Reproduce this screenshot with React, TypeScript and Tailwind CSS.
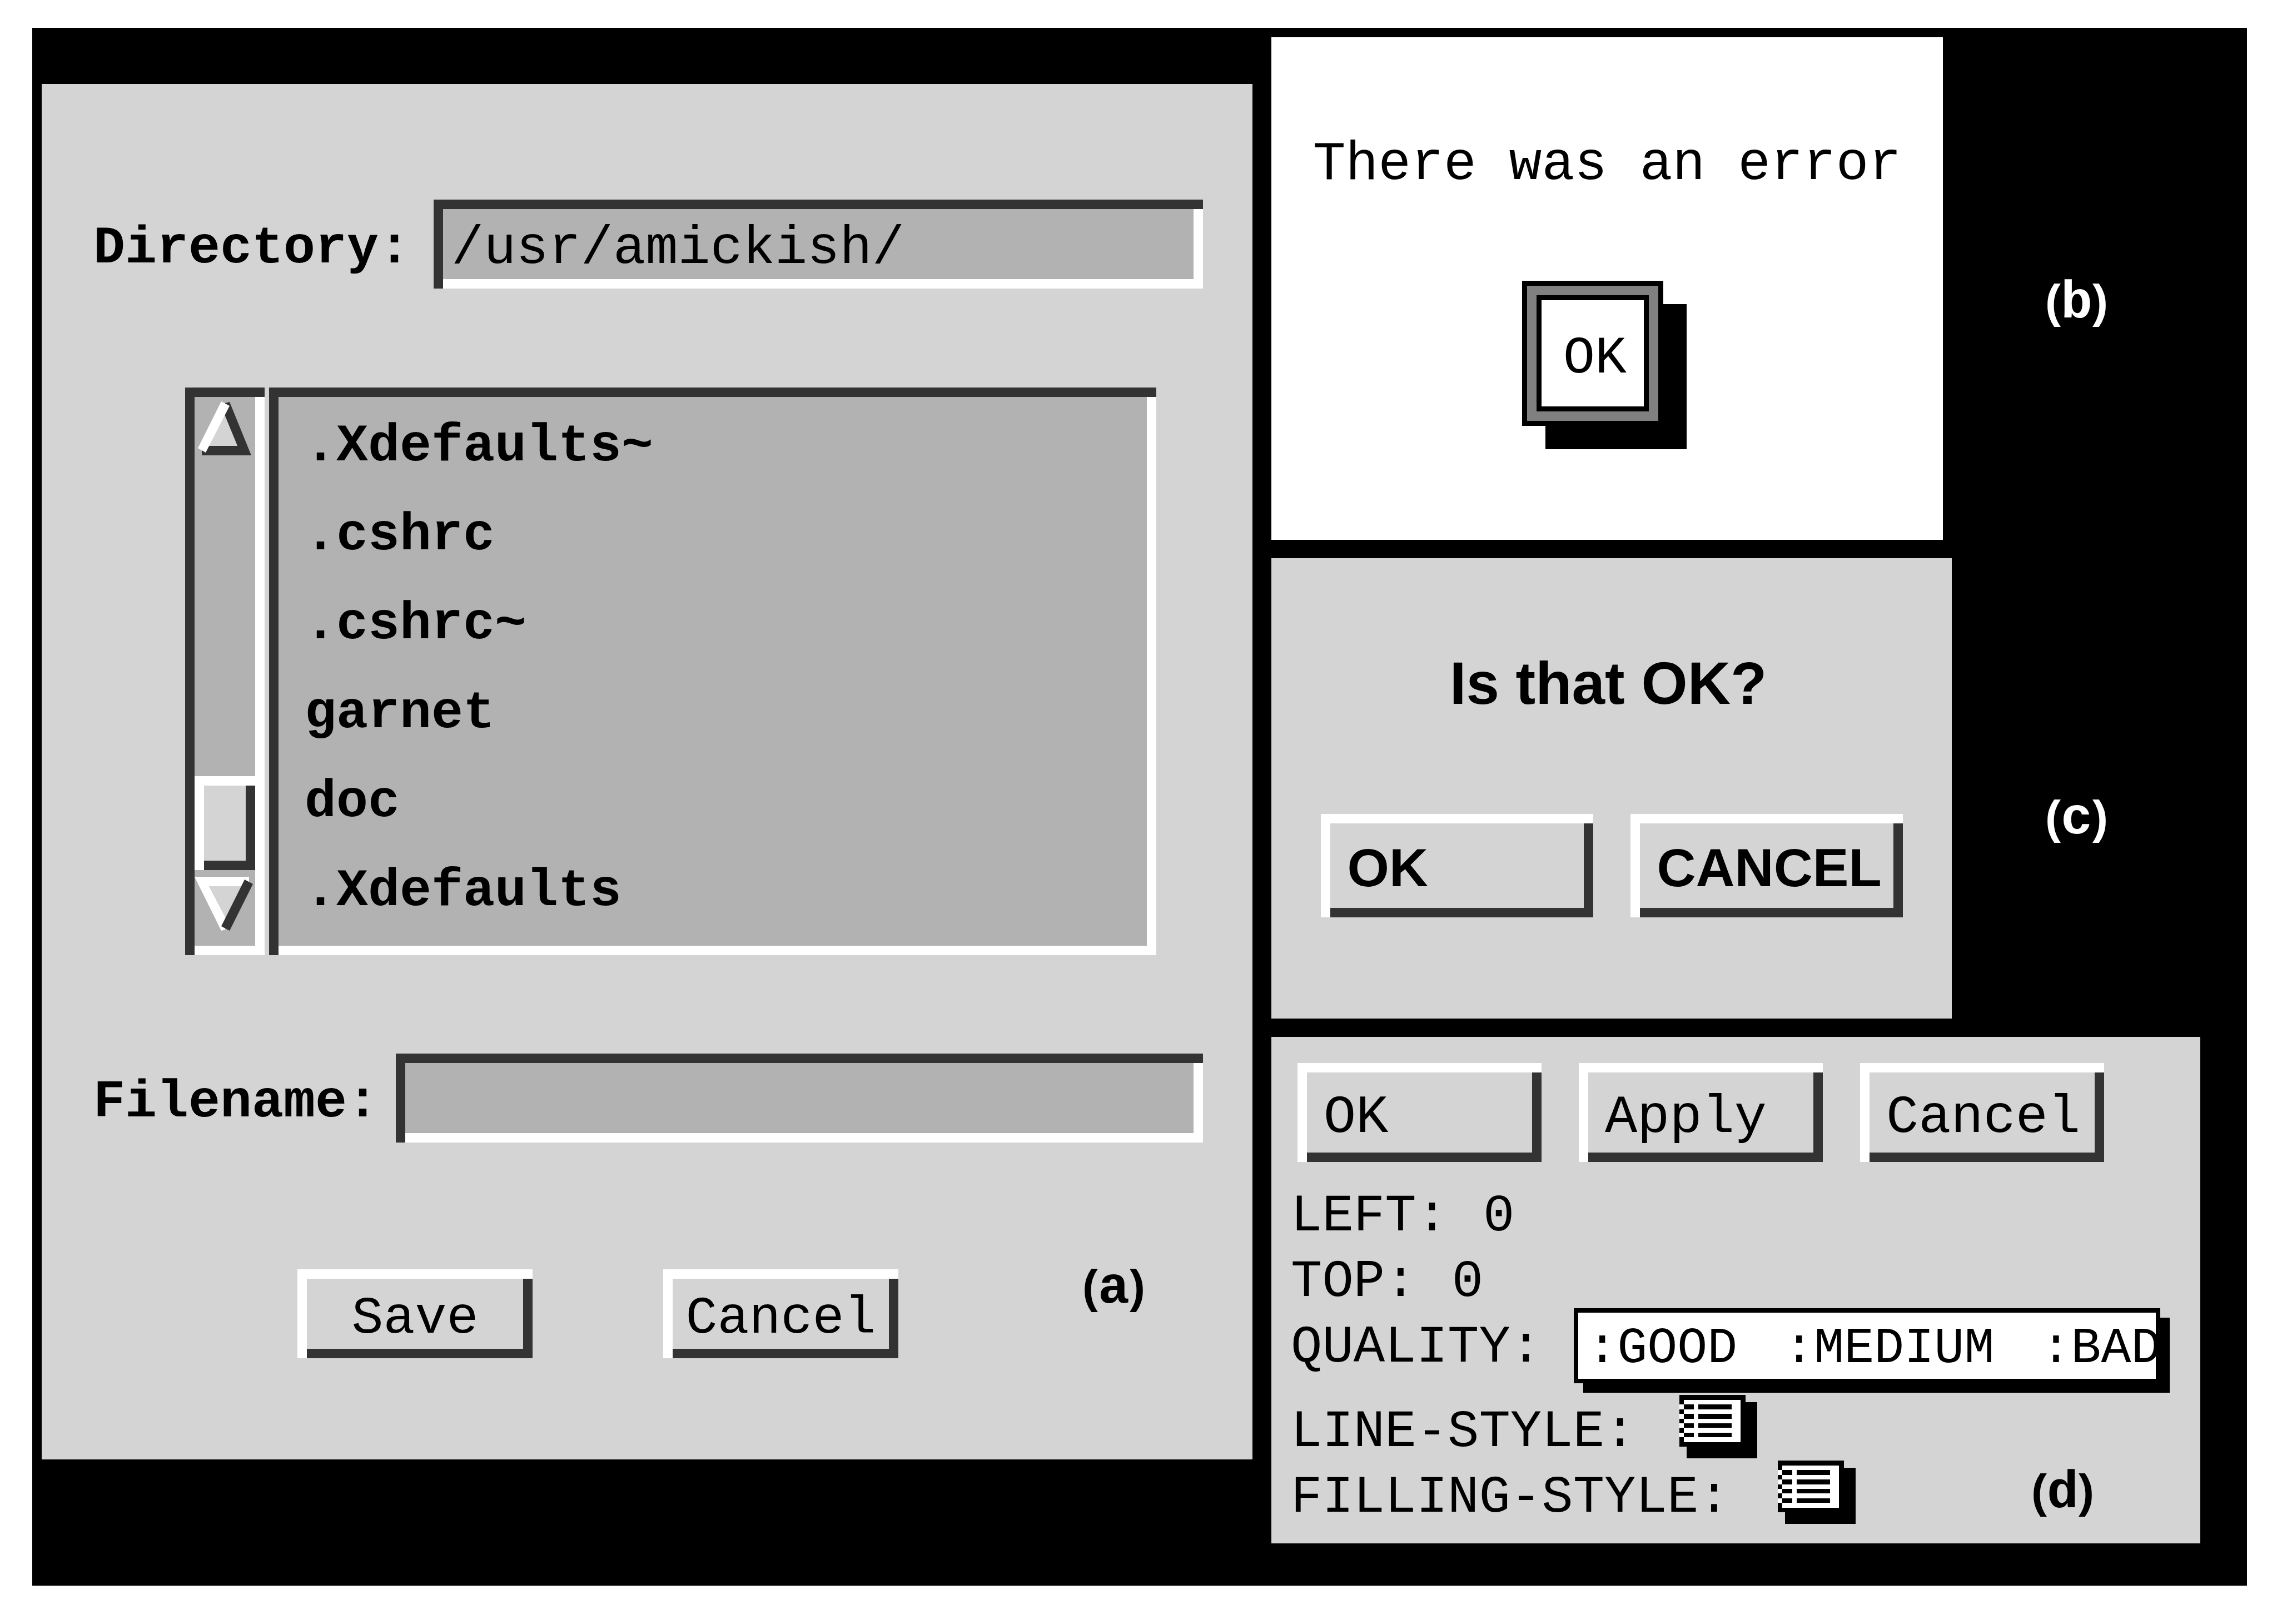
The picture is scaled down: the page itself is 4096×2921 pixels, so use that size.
import type { ReactNode } from "react";

const mono = "font-['Liberation_Mono',monospace]";
const sans = "font-['Liberation_Sans',sans-serif]";
const sunken =
  "bg-[#b2b2b2] shadow-[inset_17px_0_#333333,inset_0_17px_#333333,inset_-17px_-17px_#ffffff]";
const raised =
  "bg-[#d4d4d4] shadow-[inset_17px_0_#ffffff,inset_0_17px_#ffffff,inset_-17px_-17px_#333333]";

function Caption({ letter, className }: { letter: string; className: string }) {
  return (
    <p className={`${mono} shrink-0 self-start whitespace-nowrap text-[95px] leading-[94px] font-bold ${className}`}>
      <span className="font-['Liberation_Sans',sans-serif] text-[84px]">(</span>
      {letter}
      <span className="font-['Liberation_Sans',sans-serif] text-[84px]">)</span>
    </p>
  );
}

function MotifButton({ children, className }: { children: ReactNode; className: string }) {
  return (
    <button type="button" className={`${raised} shrink-0 whitespace-nowrap ${className}`}>
      {children}
    </button>
  );
}

function UpArrow() {
  return (
    <svg className="block h-[98px] w-[109px]" viewBox="0 0 109 98" aria-hidden="true">
      <polygon points="55,3 63,1 102,97 13,97 13,80 24,80 77,80 54,24" fill="#333333" />
      <polygon points="54,24 77,80 24,80" fill="#d4d4d4" />
      <polygon points="48,0 63,8 20,92 6,84" fill="#ffffff" />
    </svg>
  );
}

function DownArrow() {
  return (
    <svg className="block h-[98px] w-[109px]" viewBox="0 0 109 98" aria-hidden="true">
      <polygon points="0,0 98,0 98,17 26,17 56,74 55,95 48,97" fill="#ffffff" />
      <polygon points="26,17 85,17 56,74" fill="#d4d4d4" />
      <polygon points="90,5 105,13 63,97 48,89" fill="#333333" />
    </svg>
  );
}

const menuRows = [84, 168, 249, 333];

function MenuIcon() {
  return (
    <svg
      className="block h-[114px] w-[140px]"
      viewBox="0 0 512 560"
      preserveAspectRatio="none"
      shapeRendering="crispEdges"
      aria-hidden="true"
    >
      <rect x="47" y="63" width="465" height="497" />
      <rect width="434" height="458" />
      <rect x="31" y="42" width="372" height="375" fill="#ffffff" />
      {menuRows.map((y) => (
        <g key={y}>
          <rect x="0" y={y} width="31" height="42" fill="#ffffff" />
          <rect x="31" y={y} width="63" height="42" />
          <rect x="125" y={y} width="217" height="42" />
        </g>
      ))}
    </svg>
  );
}

const files = [".Xdefaults~", ".cshrc", ".cshrc~", "garnet", "doc", ".Xdefaults"];

function SaveDialog() {
  return (
    <section className={`${mono} mt-[101px] bg-[#d4d4d4] pt-[208px] pr-[89px] pb-[182px] pl-[93px]`}>
      <div className="flex items-center">
        <label htmlFor="directory" className="w-[612px] shrink-0 pt-4 text-[95px] leading-[98px] font-bold">
          Directory:
        </label>
        <input
          id="directory"
          defaultValue="/usr/amickish/"
          className={`${sunken} h-[160px] min-w-0 flex-1 pt-4 pl-[32px] text-[97px] outline-none`}
        />
      </div>

      <div className="mt-[178px] mr-[84px] ml-[165px] flex gap-2">
        <div className={`${sunken} flex w-[143px] shrink-0 flex-col p-[17px]`}>
          <button type="button" aria-label="Scroll up" className="mt-2">
            <UpArrow />
          </button>
          <div className={`${raised} mt-auto h-[169px]`} />
          <button type="button" aria-label="Scroll down" className="mt-3 mb-[26px]">
            <DownArrow />
          </button>
        </div>
        <ul className={`${sunken} flex-1 pt-[26px] pb-[35px] pl-[64px] text-[95px] leading-[160px] font-bold`}>
          {files.map((name) => (
            <li key={name}>{name}</li>
          ))}
        </ul>
      </div>

      <div className="mt-[177px] flex items-center">
        <label htmlFor="filename" className="w-[544px] shrink-0 pt-4 text-[95px] leading-[98px] font-bold">
          Filename:
        </label>
        <input
          id="filename"
          className={`${sunken} h-[160px] min-w-0 flex-1 pt-4 pl-[32px] text-[97px] outline-none`}
        />
      </div>

      <div className="mt-[228px] ml-[367px] flex">
        <MotifButton className="h-[160px] w-[423px] pt-[18px] text-[95px] leading-[98px]">Save</MotifButton>
        <MotifButton className="ml-[235px] h-[160px] w-[423px] pt-[18px] text-[95px] leading-[98px]">
          Cancel
        </MotifButton>
        <Caption letter="a" className="-mt-4 ml-[331px] text-black" />
      </div>
    </section>
  );
}

function ErrorDialog() {
  return (
    <div className="flex">
      <section className={`${mono} flex flex-1 flex-col items-center bg-white pt-[180px] pb-[205px]`}>
        <p className="text-[98px] leading-[98px] whitespace-nowrap">There was an error</p>
        <button
          type="button"
          className="mt-[160px] mr-[52px] border-[9px] border-black bg-[#808080] p-[17px] shadow-[42px_42px_#000000]"
        >
          <span className="flex h-[209px] w-[202px] items-center justify-center border-[9px] border-black bg-white pt-[18px] pl-2 text-[95px] leading-[98px]">
            OK
          </span>
        </button>
      </section>
      <Caption letter="b" className="mt-[428px] mr-[250px] ml-[184px] text-white" />
    </div>
  );
}

function ConfirmDialog() {
  return (
    <div className="flex">
      <section className={`${sans} flex-1 bg-[#d4d4d4] pt-[173px] pb-[182px] font-bold`}>
        <p className="pr-3 text-center text-[107px] leading-[104px]">Is that OK?</p>
        <div className="mt-[183px] flex justify-center gap-[67px]">
          <MotifButton className="h-[186px] w-[490px] pt-2 pl-[48px] text-left text-[97px] leading-[98px]">
            OK
          </MotifButton>
          <MotifButton className="h-[186px] w-[490px] pt-2 pl-[48px] text-left text-[97px] leading-[98px]">
            CANCEL
          </MotifButton>
        </div>
      </section>
      <Caption letter="c" className="mt-[419px] mr-[250px] ml-[168px] text-white" />
    </div>
  );
}

const actions = ["OK", "Apply", "Cancel"];
const qualities = [":GOOD", ":MEDIUM", ":BAD"];

function PropertySheet() {
  return (
    <section className={`${mono} mr-[84px] bg-[#d4d4d4] pt-[47px] pb-[23px] pl-[35px]`}>
      <div className="ml-3 flex gap-[67px]">
        {actions.map((name) => (
          <MotifButton
            key={name}
            className="h-[178px] w-[439px] pt-[18px] pl-[47px] text-left text-[97px] leading-[98px]"
          >
            {name}
          </MotifButton>
        ))}
      </div>
      <div className="mt-[39px] text-[94px] leading-[118px]">
        <div className="flex h-[118px] gap-[64px]">
          <label htmlFor="left">LEFT:</label>
          <input id="left" defaultValue="0" className="w-[200px] bg-transparent outline-none" />
        </div>
        <div className="flex h-[118px] gap-[64px]">
          <label htmlFor="top">TOP:</label>
          <input id="top" defaultValue="0" className="w-[200px] bg-transparent outline-none" />
        </div>
        <div className="flex h-[152px] items-start gap-[58px]">
          <span>QUALITY:</span>
          <div className="-mt-3 flex h-[135px] w-[1055px] gap-[84px] border-8 border-black bg-white pt-1.5 pl-4 text-[90px] leading-[118px] whitespace-nowrap shadow-[17px_17px_#000000]">
            {qualities.map((name) => (
              <button key={name} type="button" className="shrink-0">
                {name}
              </button>
            ))}
          </div>
        </div>
        <div className="flex h-[118px] items-start">
          <span>LINE-STYLE:</span>
          <button type="button" aria-label="Line style menu" className="-mt-2 ml-[78px]">
            <MenuIcon />
          </button>
        </div>
        <div className="flex h-[118px] items-start">
          <span>FILLING-STYLE:</span>
          <button type="button" aria-label="Filling style menu" className="-mt-2 ml-[86px]">
            <MenuIcon />
          </button>
          <Caption letter="d" className="mr-[191px] ml-auto text-black" />
        </div>
      </div>
    </section>
  );
}

export default function App() {
  return (
    <main className="w-full bg-white pt-[50px] pr-[54px] pb-[68px] pl-[58px] text-black">
      <div className="grid grid-cols-[2178fr_1755fr] items-start gap-[34px] bg-black pl-[17px]">
        <SaveDialog />
        <div className="flex flex-col gap-[33px] pt-[17px] pb-[76px]">
          <ErrorDialog />
          <ConfirmDialog />
          <PropertySheet />
        </div>
      </div>
    </main>
  );
}
